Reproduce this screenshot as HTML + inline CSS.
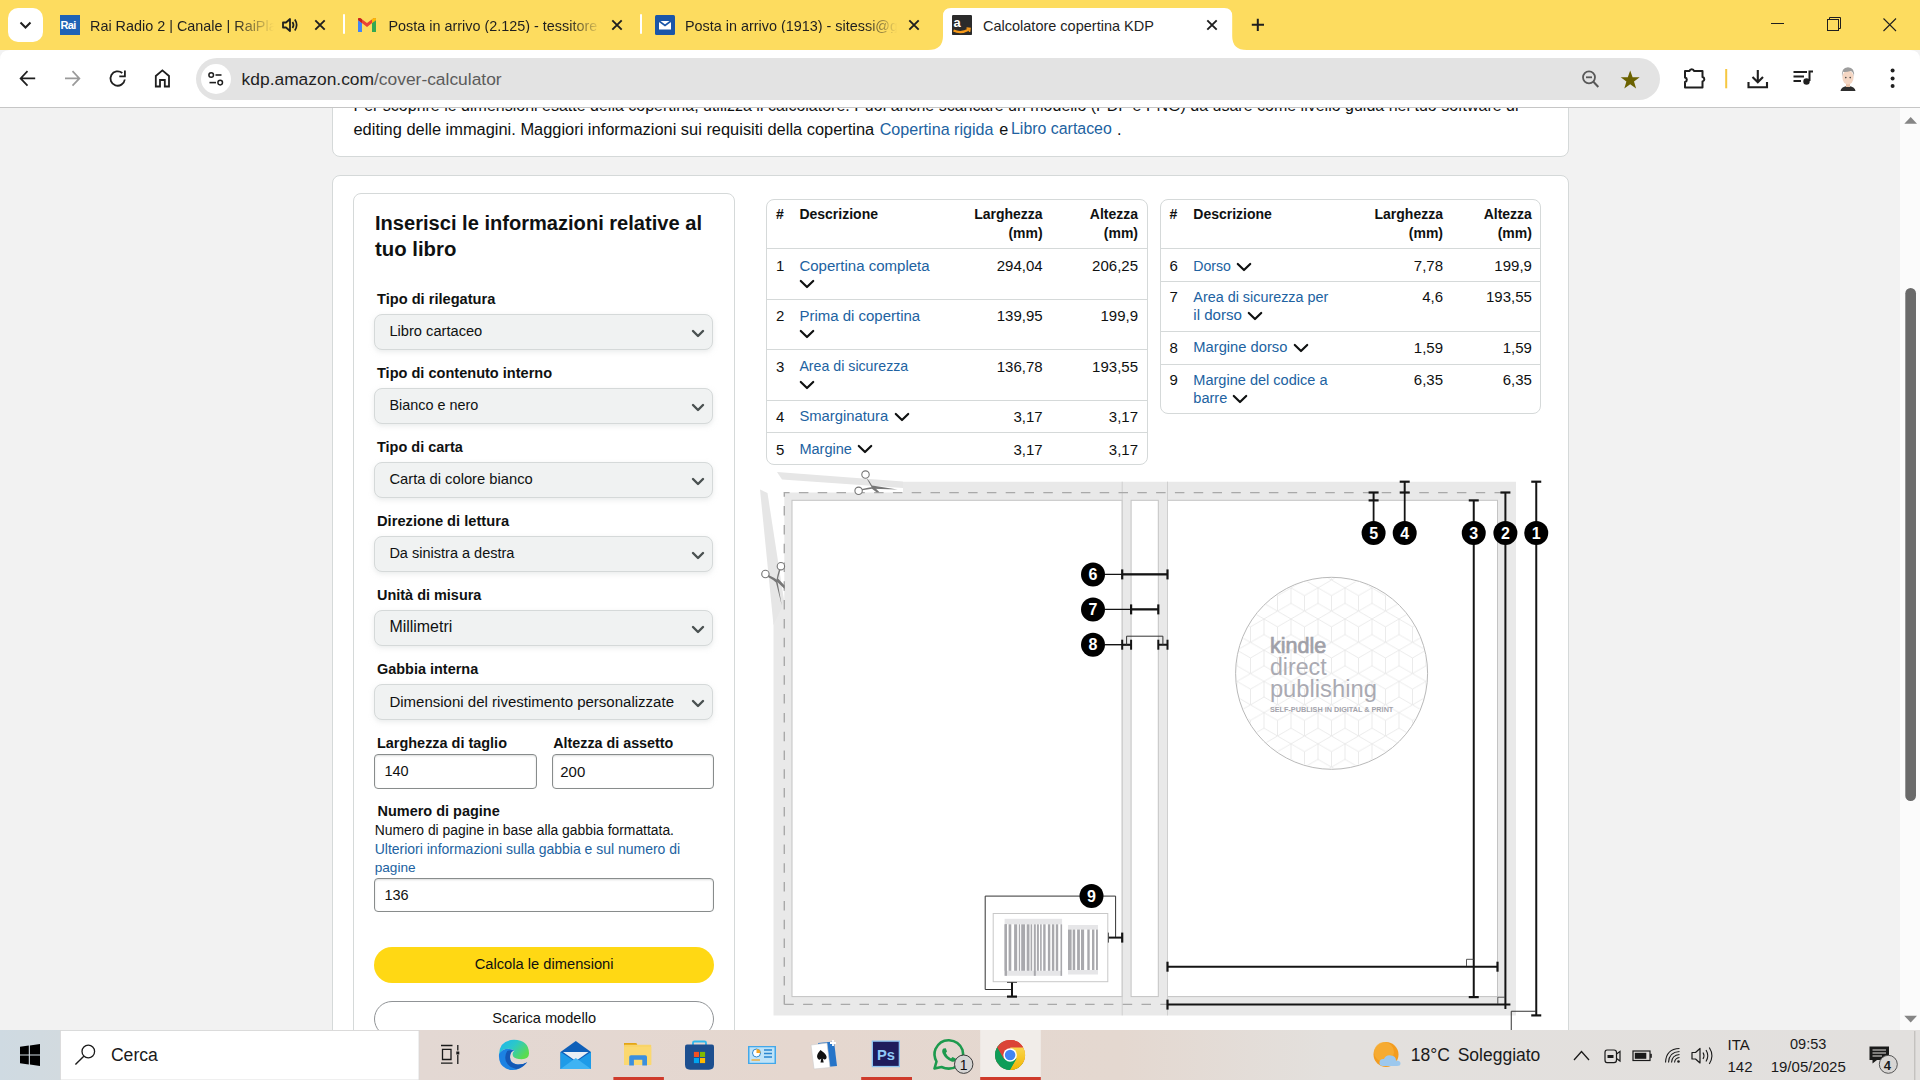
<!DOCTYPE html>
<html><head><meta charset="utf-8"><title>Calcolatore copertina KDP</title>
<style>
html,body{margin:0;padding:0;width:1920px;height:1080px;overflow:hidden;background:#f2f2f2;font-family:"Liberation Sans",sans-serif;}
.a{position:absolute;}
.t{position:absolute;line-height:1;white-space:nowrap;font-family:"Liberation Sans",sans-serif;}
#page{position:absolute;left:0;top:0;width:1920px;height:1080px;overflow:hidden;}
</style></head><body>
<div id="page">
<div class="a" style="left:332px;top:40px;width:1236.5px;height:116.5px;background:#fff;border:1px solid #d5d9d9;border-radius:8px;box-sizing:border-box;"></div>
<div class="t" style="left:353.50px;top:97.60px;font-size:16.0px;font-weight:400;color:#0f1111;">Per scoprire le dimensioni esatte della copertina, utilizza il calcolatore. Puoi anche scaricare un modello (PDF e PNG) da usare come livello guida nel tuo software di</div>
<div class="t" style="left:353.50px;top:120.75px;font-size:16.414px;font-weight:400;color:#0f1111;">editing delle immagini. Maggiori informazioni sui requisiti della copertina</div>
<div class="t" style="left:879.70px;top:120.97px;font-size:16.149px;font-weight:400;color:#2162a1;">Copertina rigida</div>
<div class="t" style="left:999.20px;top:120.93px;font-size:16.2px;font-weight:400;color:#0f1111;">e</div>
<div class="t" style="left:1011.00px;top:121.16px;font-size:15.924px;font-weight:400;color:#2162a1;">Libro cartaceo</div>
<div class="t" style="left:1117.00px;top:120.93px;font-size:16.2px;font-weight:400;color:#0f1111;">.</div>
<div class="a" style="left:332px;top:175px;width:1236.5px;height:1000px;background:#fff;border:1px solid #d5d9d9;border-radius:8px;box-sizing:border-box;"></div>
<div class="a" style="left:353px;top:192.5px;width:381.5px;height:1000px;background:#fff;border:1px solid #d5d9d9;border-radius:8px;box-sizing:border-box;"></div>
<div class="t" style="left:375.00px;top:212.63px;font-size:20.082px;font-weight:700;color:#0f1111;">Inserisci le informazioni relative al</div>
<div class="t" style="left:375.00px;top:239.02px;font-size:20.331px;font-weight:700;color:#0f1111;">tuo libro</div>
<div class="t" style="left:377.00px;top:291.75px;font-size:14.642px;font-weight:700;color:#0f1111;">Tipo di rilegatura</div>
<div class="a" style="left:374.4px;top:314px;width:339.1px;height:36px;background:#f0f2f2;border:1px solid #d5d9d9;border-radius:8px;box-sizing:border-box;box-shadow:0 2px 5px rgba(213,217,217,.5);"></div>
<div class="t" style="left:389.40px;top:324.04px;font-size:14.661px;font-weight:400;color:#0f1111;">Libro cartaceo</div>
<svg class="a" style="left:690px;top:326px" width="16" height="12" viewBox="0 0 16 12"><path d="M3 5 L8 10 L13 5" fill="none" stroke="#4a5151" stroke-width="2.4" stroke-linecap="round" stroke-linejoin="round"/></svg>
<div class="t" style="left:377.00px;top:366.13px;font-size:14.55px;font-weight:700;color:#0f1111;">Tipo di contenuto interno</div>
<div class="a" style="left:374.4px;top:388px;width:339.1px;height:36px;background:#f0f2f2;border:1px solid #d5d9d9;border-radius:8px;box-sizing:border-box;box-shadow:0 2px 5px rgba(213,217,217,.5);"></div>
<div class="t" style="left:389.40px;top:398.25px;font-size:14.407px;font-weight:400;color:#0f1111;">Bianco e nero</div>
<svg class="a" style="left:690px;top:400px" width="16" height="12" viewBox="0 0 16 12"><path d="M3 5 L8 10 L13 5" fill="none" stroke="#4a5151" stroke-width="2.4" stroke-linecap="round" stroke-linejoin="round"/></svg>
<div class="t" style="left:377.00px;top:440.19px;font-size:14.477px;font-weight:700;color:#0f1111;">Tipo di carta</div>
<div class="a" style="left:374.4px;top:462px;width:339.1px;height:36px;background:#f0f2f2;border:1px solid #d5d9d9;border-radius:8px;box-sizing:border-box;box-shadow:0 2px 5px rgba(213,217,217,.5);"></div>
<div class="t" style="left:389.40px;top:471.97px;font-size:14.743px;font-weight:400;color:#0f1111;">Carta di colore bianco</div>
<svg class="a" style="left:690px;top:474px" width="16" height="12" viewBox="0 0 16 12"><path d="M3 5 L8 10 L13 5" fill="none" stroke="#4a5151" stroke-width="2.4" stroke-linecap="round" stroke-linejoin="round"/></svg>
<div class="t" style="left:377.00px;top:513.72px;font-size:14.687px;font-weight:700;color:#0f1111;">Direzione di lettura</div>
<div class="a" style="left:374.4px;top:536px;width:339.1px;height:36px;background:#f0f2f2;border:1px solid #d5d9d9;border-radius:8px;box-sizing:border-box;box-shadow:0 2px 5px rgba(213,217,217,.5);"></div>
<div class="t" style="left:389.40px;top:546.16px;font-size:14.523px;font-weight:400;color:#0f1111;">Da sinistra a destra</div>
<svg class="a" style="left:690px;top:548px" width="16" height="12" viewBox="0 0 16 12"><path d="M3 5 L8 10 L13 5" fill="none" stroke="#4a5151" stroke-width="2.4" stroke-linecap="round" stroke-linejoin="round"/></svg>
<div class="t" style="left:377.00px;top:587.70px;font-size:14.467px;font-weight:700;color:#0f1111;">Unità di misura</div>
<div class="a" style="left:374.4px;top:610px;width:339.1px;height:36px;background:#f0f2f2;border:1px solid #d5d9d9;border-radius:8px;box-sizing:border-box;box-shadow:0 2px 5px rgba(213,217,217,.5);"></div>
<div class="t" style="left:389.40px;top:618.94px;font-size:15.949px;font-weight:400;color:#0f1111;">Millimetri</div>
<svg class="a" style="left:690px;top:622px" width="16" height="12" viewBox="0 0 16 12"><path d="M3 5 L8 10 L13 5" fill="none" stroke="#4a5151" stroke-width="2.4" stroke-linecap="round" stroke-linejoin="round"/></svg>
<div class="t" style="left:377.00px;top:661.70px;font-size:14.469px;font-weight:700;color:#0f1111;">Gabbia interna</div>
<div class="a" style="left:374.4px;top:684px;width:339.1px;height:36px;background:#f0f2f2;border:1px solid #d5d9d9;border-radius:8px;box-sizing:border-box;box-shadow:0 2px 5px rgba(213,217,217,.5);"></div>
<div class="t" style="left:389.40px;top:693.73px;font-size:15.022px;font-weight:400;color:#0f1111;">Dimensioni del rivestimento personalizzate</div>
<svg class="a" style="left:690px;top:696px" width="16" height="12" viewBox="0 0 16 12"><path d="M3 5 L8 10 L13 5" fill="none" stroke="#4a5151" stroke-width="2.4" stroke-linecap="round" stroke-linejoin="round"/></svg>
<div class="t" style="left:377.00px;top:736.22px;font-size:14.444px;font-weight:700;color:#0f1111;">Larghezza di taglio</div>
<div class="t" style="left:553.30px;top:736.34px;font-size:14.302px;font-weight:700;color:#0f1111;">Altezza di assetto</div>
<div class="a" style="left:374.2px;top:754px;width:162.5px;height:35px;background:#fff;border:1px solid #888c8c;border-radius:4px;box-sizing:border-box;box-shadow:inset 0 1px 2px rgba(15,17,17,.15);"></div>
<div class="a" style="left:551.5px;top:754px;width:162.2px;height:35px;background:#fff;border:1px solid #888c8c;border-radius:4px;box-sizing:border-box;box-shadow:inset 0 1px 2px rgba(15,17,17,.15);"></div>
<div class="t" style="left:384.40px;top:764.17px;font-size:14.506px;font-weight:400;color:#0f1111;">140</div>
<div class="t" style="left:560.30px;top:763.76px;font-size:14.985px;font-weight:400;color:#0f1111;">200</div>
<div class="t" style="left:377.50px;top:804.00px;font-size:14.47px;font-weight:700;color:#0f1111;">Numero di pagine</div>
<div class="t" style="left:374.70px;top:824.40px;font-size:13.887px;font-weight:400;color:#0f1111;">Numero di pagine in base alla gabbia formattata.</div>
<div class="t" style="left:374.70px;top:842.41px;font-size:13.991px;font-weight:400;color:#2162a1;">Ulteriori informazioni sulla gabbia e sul numero di</div>
<div class="t" style="left:374.70px;top:860.82px;font-size:13.621px;font-weight:400;color:#2162a1;">pagine</div>
<div class="a" style="left:374.2px;top:877.5px;width:339.4px;height:34px;background:#fff;border:1px solid #888c8c;border-radius:4px;box-sizing:border-box;box-shadow:inset 0 1px 2px rgba(15,17,17,.15);"></div>
<div class="t" style="left:384.40px;top:888.37px;font-size:14.506px;font-weight:400;color:#0f1111;">136</div>
<div class="a" style="left:374.2px;top:947.2px;width:339.4px;height:35.6px;background:#ffd814;border-radius:18px;"></div>
<div class="t" style="left:44.15px;width:1000px;text-align:center;top:957.11px;font-size:14.7px;font-weight:400;color:#0f1111;">Calcola le dimensioni</div>
<div class="a" style="left:374.2px;top:1001.2px;width:339.4px;height:35.6px;background:#fff;border:1px solid #909396;border-radius:18px;box-sizing:border-box;"></div>
<div class="t" style="left:44.15px;width:1000px;text-align:center;top:1011.29px;font-size:14.605px;font-weight:400;color:#0f1111;">Scarica modello</div>
<div class="a" style="left:766px;top:198.6px;width:381.5999999999999px;height:266.20000000000005px;background:#fff;border:1px solid #d5d9d9;border-radius:8px;box-sizing:border-box;"></div>
<div class="t" style="left:776.00px;top:207.30px;font-size:14.0px;font-weight:700;color:#0f1111;">#</div>
<div class="t" style="left:799.40px;top:207.30px;font-size:14.0px;font-weight:700;color:#0f1111;">Descrizione</div>
<div class="t" style="right:877.40px;top:207.30px;font-size:14.0px;font-weight:700;color:#0f1111;">Larghezza</div>
<div class="t" style="right:877.40px;top:225.50px;font-size:14.0px;font-weight:700;color:#0f1111;">(mm)</div>
<div class="t" style="right:782.00px;top:207.30px;font-size:14.0px;font-weight:700;color:#0f1111;">Altezza</div>
<div class="t" style="right:782.00px;top:225.50px;font-size:14.0px;font-weight:700;color:#0f1111;">(mm)</div>
<div class="a" style="left:767px;top:248px;width:379.5999999999999px;height:1.2px;background:#d5d9d9;"></div>
<div class="t" style="left:776.00px;top:257.85px;font-size:15px;font-weight:400;color:#0f1111;">1</div>
<div class="t" style="left:799.40px;top:257.82px;font-size:15.039px;font-weight:400;color:#2162a1;">Copertina completa</div>
<svg class="a" style="left:799px;top:279px" width="16" height="10" viewBox="0 0 16 10"><path d="M1.8 2 L8 8 L14.2 2" fill="none" stroke="#0f1111" stroke-width="2.2" stroke-linecap="round" stroke-linejoin="round"/></svg>
<div class="t" style="right:877.40px;top:257.85px;font-size:15px;font-weight:400;color:#0f1111;">294,04</div>
<div class="t" style="right:782.00px;top:257.85px;font-size:15px;font-weight:400;color:#0f1111;">206,25</div>
<div class="a" style="left:767px;top:298.5px;width:379.5999999999999px;height:1.2px;background:#d5d9d9;"></div>
<div class="t" style="left:776.00px;top:307.55px;font-size:15px;font-weight:400;color:#0f1111;">2</div>
<div class="t" style="left:799.40px;top:307.56px;font-size:14.99px;font-weight:400;color:#2162a1;">Prima di copertina</div>
<svg class="a" style="left:799px;top:329px" width="16" height="10" viewBox="0 0 16 10"><path d="M1.8 2 L8 8 L14.2 2" fill="none" stroke="#0f1111" stroke-width="2.2" stroke-linecap="round" stroke-linejoin="round"/></svg>
<div class="t" style="right:877.40px;top:307.55px;font-size:15px;font-weight:400;color:#0f1111;">139,95</div>
<div class="t" style="right:782.00px;top:307.55px;font-size:15px;font-weight:400;color:#0f1111;">199,9</div>
<div class="a" style="left:767px;top:349px;width:379.5999999999999px;height:1.2px;background:#d5d9d9;"></div>
<div class="t" style="left:776.00px;top:358.65px;font-size:15px;font-weight:400;color:#0f1111;">3</div>
<div class="t" style="left:799.40px;top:359.33px;font-size:14.199px;font-weight:400;color:#2162a1;">Area di sicurezza</div>
<svg class="a" style="left:799px;top:380px" width="16" height="10" viewBox="0 0 16 10"><path d="M1.8 2 L8 8 L14.2 2" fill="none" stroke="#0f1111" stroke-width="2.2" stroke-linecap="round" stroke-linejoin="round"/></svg>
<div class="t" style="right:877.40px;top:358.65px;font-size:15px;font-weight:400;color:#0f1111;">136,78</div>
<div class="t" style="right:782.00px;top:358.65px;font-size:15px;font-weight:400;color:#0f1111;">193,55</div>
<div class="a" style="left:767px;top:400px;width:379.5999999999999px;height:1.2px;background:#d5d9d9;"></div>
<div class="t" style="left:776.00px;top:408.65px;font-size:15px;font-weight:400;color:#0f1111;">4</div>
<div class="t" style="left:799.40px;top:408.81px;font-size:14.81px;font-weight:400;color:#2162a1;">Smarginatura</div>
<svg class="a" style="left:893.5px;top:411.5px" width="16" height="10" viewBox="0 0 16 10"><path d="M1.8 2 L8 8 L14.2 2" fill="none" stroke="#0f1111" stroke-width="2.2" stroke-linecap="round" stroke-linejoin="round"/></svg>
<div class="t" style="right:877.40px;top:408.65px;font-size:15px;font-weight:400;color:#0f1111;">3,17</div>
<div class="t" style="right:782.00px;top:408.65px;font-size:15px;font-weight:400;color:#0f1111;">3,17</div>
<div class="a" style="left:767px;top:432px;width:379.5999999999999px;height:1.2px;background:#d5d9d9;"></div>
<div class="t" style="left:776.00px;top:441.65px;font-size:15px;font-weight:400;color:#0f1111;">5</div>
<div class="t" style="left:799.40px;top:442.02px;font-size:14.561px;font-weight:400;color:#2162a1;">Margine</div>
<svg class="a" style="left:856.5px;top:444px" width="16" height="10" viewBox="0 0 16 10"><path d="M1.8 2 L8 8 L14.2 2" fill="none" stroke="#0f1111" stroke-width="2.2" stroke-linecap="round" stroke-linejoin="round"/></svg>
<div class="t" style="right:877.40px;top:441.65px;font-size:15px;font-weight:400;color:#0f1111;">3,17</div>
<div class="t" style="right:782.00px;top:441.65px;font-size:15px;font-weight:400;color:#0f1111;">3,17</div>
<div class="a" style="left:1160.4px;top:198.6px;width:380.79999999999995px;height:215.70000000000002px;background:#fff;border:1px solid #d5d9d9;border-radius:8px;box-sizing:border-box;"></div>
<div class="t" style="left:1169.40px;top:207.30px;font-size:14.0px;font-weight:700;color:#0f1111;">#</div>
<div class="t" style="left:1193.30px;top:207.30px;font-size:14.0px;font-weight:700;color:#0f1111;">Descrizione</div>
<div class="t" style="right:477.00px;top:207.30px;font-size:14.0px;font-weight:700;color:#0f1111;">Larghezza</div>
<div class="t" style="right:477.00px;top:225.50px;font-size:14.0px;font-weight:700;color:#0f1111;">(mm)</div>
<div class="t" style="right:388.10px;top:207.30px;font-size:14.0px;font-weight:700;color:#0f1111;">Altezza</div>
<div class="t" style="right:388.10px;top:225.50px;font-size:14.0px;font-weight:700;color:#0f1111;">(mm)</div>
<div class="a" style="left:1161.4px;top:248px;width:378.79999999999995px;height:1.2px;background:#d5d9d9;"></div>
<div class="t" style="left:1169.40px;top:257.85px;font-size:15px;font-weight:400;color:#0f1111;">6</div>
<div class="t" style="left:1193.30px;top:258.59px;font-size:14.134px;font-weight:400;color:#2162a1;">Dorso</div>
<svg class="a" style="left:1236px;top:261.5px" width="16" height="10" viewBox="0 0 16 10"><path d="M1.8 2 L8 8 L14.2 2" fill="none" stroke="#0f1111" stroke-width="2.2" stroke-linecap="round" stroke-linejoin="round"/></svg>
<div class="t" style="right:477.00px;top:257.85px;font-size:15px;font-weight:400;color:#0f1111;">7,78</div>
<div class="t" style="right:388.10px;top:257.85px;font-size:15px;font-weight:400;color:#0f1111;">199,9</div>
<div class="a" style="left:1161.4px;top:281px;width:378.79999999999995px;height:1.2px;background:#d5d9d9;"></div>
<div class="t" style="left:1169.40px;top:289.45px;font-size:15px;font-weight:400;color:#0f1111;">7</div>
<div class="t" style="left:1193.30px;top:289.97px;font-size:14.384px;font-weight:400;color:#2162a1;">Area di sicurezza per</div>
<div class="t" style="left:1193.30px;top:307.46px;font-size:15.108px;font-weight:400;color:#2162a1;">il dorso</div>
<svg class="a" style="left:1247px;top:310.5px" width="16" height="10" viewBox="0 0 16 10"><path d="M1.8 2 L8 8 L14.2 2" fill="none" stroke="#0f1111" stroke-width="2.2" stroke-linecap="round" stroke-linejoin="round"/></svg>
<div class="t" style="right:477.00px;top:289.45px;font-size:15px;font-weight:400;color:#0f1111;">4,6</div>
<div class="t" style="right:388.10px;top:289.45px;font-size:15px;font-weight:400;color:#0f1111;">193,55</div>
<div class="a" style="left:1161.4px;top:331px;width:378.79999999999995px;height:1.2px;background:#d5d9d9;"></div>
<div class="t" style="left:1169.40px;top:339.95px;font-size:15px;font-weight:400;color:#0f1111;">8</div>
<div class="t" style="left:1193.30px;top:340.19px;font-size:14.723px;font-weight:400;color:#2162a1;">Margine dorso</div>
<svg class="a" style="left:1292.5px;top:342.5px" width="16" height="10" viewBox="0 0 16 10"><path d="M1.8 2 L8 8 L14.2 2" fill="none" stroke="#0f1111" stroke-width="2.2" stroke-linecap="round" stroke-linejoin="round"/></svg>
<div class="t" style="right:477.00px;top:339.95px;font-size:15px;font-weight:400;color:#0f1111;">1,59</div>
<div class="t" style="right:388.10px;top:339.95px;font-size:15px;font-weight:400;color:#0f1111;">1,59</div>
<div class="a" style="left:1161.4px;top:364px;width:378.79999999999995px;height:1.2px;background:#d5d9d9;"></div>
<div class="t" style="left:1169.40px;top:372.45px;font-size:15px;font-weight:400;color:#0f1111;">9</div>
<div class="t" style="left:1193.30px;top:372.83px;font-size:14.555px;font-weight:400;color:#2162a1;">Margine del codice a</div>
<div class="t" style="left:1193.30px;top:390.92px;font-size:14.566px;font-weight:400;color:#2162a1;">barre</div>
<svg class="a" style="left:1231.5px;top:393.5px" width="16" height="10" viewBox="0 0 16 10"><path d="M1.8 2 L8 8 L14.2 2" fill="none" stroke="#0f1111" stroke-width="2.2" stroke-linecap="round" stroke-linejoin="round"/></svg>
<div class="t" style="right:477.00px;top:372.45px;font-size:15px;font-weight:400;color:#0f1111;">6,35</div>
<div class="t" style="right:388.10px;top:372.45px;font-size:15px;font-weight:400;color:#0f1111;">6,35</div>
<svg class="a" style="left:0;top:0" width="1920" height="1030" viewBox="0 0 1920 1030"><path d="M903 481.7 H1516 V1015.4 H773.5 V600 L784.3 600 L784.3 492.6 L903 492.6 Z" fill="#e9e9e9"/><path d="M777 472 L903 481.5 L903 488 L782 479.5 Z" fill="#e6e6e6"/><path d="M760 489.5 L767.5 493 L784.3 602 L773.5 625 Z" fill="#e6e6e6"/><rect x="792" y="500.3" width="330.20000000000005" height="496.3" fill="#fff" stroke="#c4c4c4" stroke-width="1"/><rect x="1131.1" y="500.3" width="27.200000000000045" height="496.3" fill="#fff" stroke="#c4c4c4" stroke-width="1"/><rect x="1167.5" y="500.3" width="330.0" height="496.3" fill="#fff" stroke="#c4c4c4" stroke-width="1"/><path d="M1122.2 481.7 V1015.4 M1167.5 481.7 V1015.4" stroke="#cfcfcf" stroke-width="1"/><path d="M784.3 1004.4 V492.6 H1505.4" fill="none" stroke="#a9a9a9" stroke-width="1.4" stroke-dasharray="9.5 9.3"/><path d="M784.3 1004.4 H1167.5" fill="none" stroke="#a9a9a9" stroke-width="1.4" stroke-dasharray="9.5 9.3"/><path d="M1536.25 481.7 V1015.4" stroke="#141414" stroke-width="2"/><path d="M1531.25 481.7 H1541.25" stroke="#141414" stroke-width="2.2"/><path d="M1531.25 1015.4 H1541.25" stroke="#141414" stroke-width="2.2"/><path d="M1505.4 492.5 V1009" stroke="#141414" stroke-width="2"/><path d="M1500.4 492.5 H1510.4" stroke="#141414" stroke-width="2.2"/><path d="M1473.75 500.4 V997.1" stroke="#141414" stroke-width="2"/><path d="M1468.75 500.4 H1478.75" stroke="#141414" stroke-width="2.2"/><path d="M1468.75 997.1 H1478.75" stroke="#141414" stroke-width="2.2"/><path d="M1404.7 481.7 V492.5" stroke="#141414" stroke-width="2"/><path d="M1399.7 481.7 H1409.7" stroke="#141414" stroke-width="2.2"/><path d="M1399.7 492.5 H1409.7" stroke="#141414" stroke-width="2.2"/><path d="M1404.7 492.5 V530" stroke="#141414" stroke-width="1.8"/><path d="M1373.6 492.5 V500.4" stroke="#141414" stroke-width="2"/><path d="M1368.6 492.5 H1378.6" stroke="#141414" stroke-width="2.2"/><path d="M1368.6 500.4 H1378.6" stroke="#141414" stroke-width="2.2"/><path d="M1373.6 500.4 V530" stroke="#141414" stroke-width="1.8"/><path d="M1167.5 966.7 H1497.5" stroke="#141414" stroke-width="2"/><path d="M1167.5 961.7 V971.7" stroke="#141414" stroke-width="2.2"/><path d="M1497.5 961.7 V971.7" stroke="#141414" stroke-width="2.2"/><path d="M1466.5 966 V959.3 H1473.7" fill="none" stroke="#444" stroke-width="0.9"/><path d="M1167.5 1004.6 H1510.4" stroke="#141414" stroke-width="2"/><path d="M1167.5 999.6 V1009.6" stroke="#141414" stroke-width="2.2"/><path d="M1497.8 1004 V997.2 H1505.2" fill="none" stroke="#444" stroke-width="0.9"/><path d="M1511.25 1032 V1011.25 H1536" fill="none" stroke="#333" stroke-width="1"/><path d="M1105 574.4 H1167.5" stroke="#141414" stroke-width="1.4"/><path d="M1167.5 569.4 V579.4" stroke="#141414" stroke-width="2.2"/><path d="M1122.2 569.4 V579.4" stroke="#141414" stroke-width="2.2"/><path d="M1122.2 574.4 H1167.5" stroke="#141414" stroke-width="2.2"/><path d="M1105 609.4 H1158.3" stroke="#141414" stroke-width="1.4"/><path d="M1158.3 604.4 V614.4" stroke="#141414" stroke-width="2.2"/><path d="M1131.1 604.4 V614.4" stroke="#141414" stroke-width="2.2"/><path d="M1131.1 609.4 H1158.3" stroke="#141414" stroke-width="2.2"/><path d="M1105 644.7 H1131.1" stroke="#141414" stroke-width="1.4"/><path d="M1122.2 644.7 H1131.1 M1158.3 644.7 H1167.5" stroke="#141414" stroke-width="2"/><path d="M1122.2 639.7 V649.7" stroke="#141414" stroke-width="2"/><path d="M1131.1 639.7 V649.7" stroke="#141414" stroke-width="2"/><path d="M1158.3 639.7 V649.7" stroke="#141414" stroke-width="2"/><path d="M1167.5 639.7 V649.7" stroke="#141414" stroke-width="2"/><path d="M1126.6 645 V636.2 H1162.9 V645" fill="none" stroke="#333" stroke-width="1"/><path d="M985.2 896.1 H1115.6 V937.6 M985.2 896.1 V989.5 H1012" fill="none" stroke="#333" stroke-width="1"/><path d="M1107.8 937.6 H1122.2" stroke="#141414" stroke-width="2"/><path d="M1107.8 932.6 V942.6" stroke="#141414" stroke-width="2.2"/><path d="M1122.2 932.6 V942.6" stroke="#141414" stroke-width="2.2"/><path d="M1012 981.7 V996.6" stroke="#141414" stroke-width="2"/><path d="M1007 981.7 H1017" stroke="#141414" stroke-width="2.2"/><path d="M1007 996.6 H1017" stroke="#141414" stroke-width="2.2"/><rect x="993.2" y="913.5" width="114.6" height="68.2" fill="#fff" stroke="#c8c8c8" stroke-width="1"/><rect x="1004.6" y="918.8" width="57.5" height="5.5" fill="#e6e6e8"/><rect x="1004.6" y="970.8" width="57.5" height="5" fill="#e6e6e8"/><rect x="1004.6" y="924.3" width="2.4" height="46.5" fill="#a9a9ad"/><rect x="1008.6" y="924.3" width="2.7" height="46.5" fill="#a9a9ad"/><rect x="1014.1" y="924.3" width="3.1" height="46.5" fill="#a9a9ad"/><rect x="1018.8" y="924.3" width="1.3" height="46.5" fill="#a9a9ad"/><rect x="1021.2" y="924.3" width="3.9" height="46.5" fill="#a9a9ad"/><rect x="1026.7" y="924.3" width="2.8" height="46.5" fill="#a9a9ad"/><rect x="1030.6" y="924.3" width="1.6" height="46.5" fill="#a9a9ad"/><rect x="1036.9" y="924.3" width="2.0" height="46.5" fill="#a9a9ad"/><rect x="1040.1" y="924.3" width="1.6" height="46.5" fill="#a9a9ad"/><rect x="1043.2" y="924.3" width="2.4" height="46.5" fill="#a9a9ad"/><rect x="1047.9" y="924.3" width="2.4" height="46.5" fill="#a9a9ad"/><rect x="1051.9" y="924.3" width="2.4" height="46.5" fill="#a9a9ad"/><rect x="1055.8" y="924.3" width="2.4" height="46.5" fill="#a9a9ad"/><rect x="1004.6" y="924.3" width="2.4" height="51.5" fill="#a9a9ad"/><rect x="1033.8" y="924.3" width="2.0" height="51.5" fill="#a9a9ad"/><rect x="1060.5" y="924.3" width="1.6" height="51.5" fill="#a9a9ad"/><rect x="1068" y="925" width="30" height="4.5" fill="#e6e6e8"/><rect x="1068" y="970" width="30" height="4.5" fill="#e6e6e8"/><rect x="1068" y="929.5" width="3.6" height="40.5" fill="#a9a9ad"/><rect x="1072.7" y="929.5" width="2.5" height="40.5" fill="#a9a9ad"/><rect x="1077.1" y="929.5" width="2.8" height="40.5" fill="#a9a9ad"/><rect x="1081" y="929.5" width="3.1" height="40.5" fill="#a9a9ad"/><rect x="1087.3" y="929.5" width="2.4" height="40.5" fill="#a9a9ad"/><rect x="1092" y="929.5" width="2.4" height="40.5" fill="#a9a9ad"/><rect x="1096" y="929.5" width="1.9" height="40.5" fill="#a9a9ad"/><circle cx="1331.6" cy="673.3" r="96" fill="#fff" stroke="#b9b9b9" stroke-width="1"/><defs><clipPath id="lc"><circle cx="1331.6" cy="673.3" r="95"/></clipPath><pattern id="hex" width="27" height="31.2" patternUnits="userSpaceOnUse" x="1237" y="580"><path d="M13.5 0 L27 7.8 V23.4 L13.5 31.2 L0 23.4 V7.8 Z M13.5 15.6 L27 7.8 M13.5 15.6 L0 7.8 M13.5 15.6 V31.2" fill="none" stroke="#e6e6e6" stroke-width="0.8"/></pattern></defs><circle cx="1331.6" cy="673.3" r="95" fill="url(#hex)"/><text x="1269.9" y="652.6" font-family="Liberation Sans" font-weight="400" font-size="22" fill="#a0a0a8" stroke="#a0a0a8" stroke-width="0.7" textLength="56.3" lengthAdjust="spacingAndGlyphs">kindle</text><text x="1269.9" y="675" font-family="Liberation Sans" font-size="23" fill="#aaaab2" textLength="56.7" lengthAdjust="spacingAndGlyphs">direct</text><text x="1269.9" y="697.4" font-family="Liberation Sans" font-size="23.5" fill="#aaaab2" textLength="107" lengthAdjust="spacingAndGlyphs">publishing</text><text x="1269.9" y="711.5" font-family="Liberation Sans" font-weight="700" font-size="7.6" fill="#a3a3ab" textLength="123.4" lengthAdjust="spacingAndGlyphs">SELF-PUBLISH IN DIGITAL &amp; PRINT</text><circle cx="1536.25" cy="532.9" r="12" fill="#000"/><text x="1536.25" y="538.5" font-family="Liberation Sans" font-weight="700" font-size="16" fill="#fff" text-anchor="middle">1</text><circle cx="1505.4" cy="532.9" r="12" fill="#000"/><text x="1505.4" y="538.5" font-family="Liberation Sans" font-weight="700" font-size="16" fill="#fff" text-anchor="middle">2</text><circle cx="1473.75" cy="532.9" r="12" fill="#000"/><text x="1473.75" y="538.5" font-family="Liberation Sans" font-weight="700" font-size="16" fill="#fff" text-anchor="middle">3</text><circle cx="1404.7" cy="532.9" r="12" fill="#000"/><text x="1404.7" y="538.5" font-family="Liberation Sans" font-weight="700" font-size="16" fill="#fff" text-anchor="middle">4</text><circle cx="1373.6" cy="532.9" r="12" fill="#000"/><text x="1373.6" y="538.5" font-family="Liberation Sans" font-weight="700" font-size="16" fill="#fff" text-anchor="middle">5</text><circle cx="1093" cy="574.4" r="12" fill="#000"/><text x="1093" y="580.0" font-family="Liberation Sans" font-weight="700" font-size="16" fill="#fff" text-anchor="middle">6</text><circle cx="1093" cy="609.4" r="12" fill="#000"/><text x="1093" y="615.0" font-family="Liberation Sans" font-weight="700" font-size="16" fill="#fff" text-anchor="middle">7</text><circle cx="1093" cy="644.7" r="12" fill="#000"/><text x="1093" y="650.3000000000001" font-family="Liberation Sans" font-weight="700" font-size="16" fill="#fff" text-anchor="middle">8</text><circle cx="1091.5" cy="896.1" r="12" fill="#000"/><text x="1091.5" y="901.7" font-family="Liberation Sans" font-weight="700" font-size="16" fill="#fff" text-anchor="middle">9</text><g fill="none" stroke="#777" stroke-width="1.1"><circle cx="865.5" cy="474.6" r="3.7" fill="#fff"/><circle cx="858.6" cy="490.8" r="3.7" fill="#fff"/></g><path d="M866.5 478.3 Q870 481 872 485.5 L897.5 489.4 L872.5 488.8 Z" fill="#777"/><path d="M862 489 Q868 487.5 874 486.8 L879.5 492.3 L876.5 492.3 L872 488.8 Q867 489.5 862.2 490.2 Z" fill="#777"/><g fill="#fff" stroke="#777" stroke-width="1.1"><circle cx="765.4" cy="574" r="3.7"/><circle cx="780.9" cy="566.2" r="3.7"/></g><path d="M768.5 575 Q774 577.5 777.2 580 L781.8 605.5 L776 582.5 Q772.5 579.2 768 576.9 Z" fill="#777"/><path d="M780.4 569.8 Q779.2 574 778 578.5 L784.6 585.5 L784.6 589 L776.3 581 Q777.3 575 779 569.5 Z" fill="#777"/></svg>
</div>
<div class="a" style="left:1900px;top:108px;width:20px;height:922px;background:#fbfbfb;"></div>
<svg class="a" style="left:1900px;top:108px" width="20" height="922"><path d="M4.3 15.8 L10.7 9 L17 15.8 Z" fill="#858585"/><path d="M4.3 907.8 L10.7 914.6 L17 907.8 Z" fill="#858585"/><rect x="5.3" y="180" width="10.7" height="513" rx="5.3" fill="#6a6a6a"/></svg>
<div class="a" style="left:0;top:0;width:1920px;height:50px;background:#fddc5f;"></div>
<!-- tab dropdown -->
<div class="a" style="left:8px;top:8px;width:35px;height:34px;border-radius:10px;background:#fff;"></div>
<svg class="a" style="left:8px;top:8px" width="35" height="34"><path d="M12.5 14.5 L17.5 19.5 L22.5 14.5" fill="none" stroke="#1f1f1f" stroke-width="2"/></svg>
<!-- tab 1 -->
<div class="a" style="left:60px;top:15px;width:20px;height:20px;background:#1f63b6;"></div>
<div class="t" style="left:60.5px;top:19.5px;font-size:11px;font-weight:700;color:#fff;letter-spacing:-0.6px;">Rai</div>
<div class="t" style="left:90px;top:18.6px;font-size:14.4px;color:#1f1f1f;width:184px;overflow:hidden;-webkit-mask-image:linear-gradient(90deg,#000 78%,transparent 100%);">Rai Radio 2 | Canale | RaiPlay Sound</div>
<svg class="a" style="left:280px;top:15px" width="20" height="20"><path d="M3 7.5 H6 L10 4 V16 L6 12.5 H3 Z" fill="none" stroke="#1f1f1f" stroke-width="1.8" stroke-linejoin="round"/><path d="M12.5 7 Q14.5 10 12.5 13" fill="none" stroke="#1f1f1f" stroke-width="1.7"/><path d="M14.8 4.5 Q18.5 10 14.8 15.5" fill="none" stroke="#1f1f1f" stroke-width="1.7"/></svg>
<svg class="a" style="left:310px;top:15px" width="20" height="20"><path d="M5.3 5.3 L14.7 14.7 M14.7 5.3 L5.3 14.7" stroke="#1f1f1f" stroke-width="1.9"/></svg>
<div class="a" style="left:343px;top:14px;width:2px;height:20px;background:#fff;border-radius:1px;"></div>
<!-- tab 2 gmail -->
<svg class="a" style="left:357px;top:17px" width="20" height="16" viewBox="0 0 20 16"><path d="M1 3 V15 H5 V6 Z" fill="#4285f4"/><path d="M15 6 V15 H19 V3 Z" fill="#34a853"/><path d="M1 3 L10 10 L19 3 L19 1.5 Q18 0.5 16.5 1.2 L10 6 L3.5 1.2 Q2 0.5 1 1.5 Z" fill="#ea4335"/><path d="M15 6 L19 3 V1.5 Q18 0.5 16.5 1.2 L15 2.3 Z" fill="#fbbc04"/><path d="M1 3 L5 6 V2.3 L3.5 1.2 Q2 0.5 1 1.5 Z" fill="#c5221f"/></svg>
<div class="t" style="left:388.5px;top:18.6px;font-size:14.4px;color:#1f1f1f;width:212px;overflow:hidden;-webkit-mask-image:linear-gradient(90deg,#000 85%,transparent 100%);">Posta in arrivo (2.125) - tessitore</div>
<svg class="a" style="left:607px;top:15px" width="20" height="20"><path d="M5.3 5.3 L14.7 14.7 M14.7 5.3 L5.3 14.7" stroke="#1f1f1f" stroke-width="1.9"/></svg>
<div class="a" style="left:640px;top:14px;width:2px;height:20px;background:#fff;border-radius:1px;"></div>
<!-- tab 3 mail -->
<svg class="a" style="left:655px;top:15px" width="20" height="20"><rect x="0" y="0" width="20" height="20" rx="1.5" fill="#1a56a8"/><path d="M4 6 H16 V14.5 H4 Z" fill="#fff"/><path d="M4 6 L10 10.5 L16 6" fill="none" stroke="#1a56a8" stroke-width="1.6"/></svg>
<div class="t" style="left:685px;top:18.6px;font-size:14.4px;color:#1f1f1f;width:212px;overflow:hidden;-webkit-mask-image:linear-gradient(90deg,#000 85%,transparent 100%);">Posta in arrivo (1913) - sitessi@gmail.com</div>
<svg class="a" style="left:904px;top:15px" width="20" height="20"><path d="M5.3 5.3 L14.7 14.7 M14.7 5.3 L5.3 14.7" stroke="#1f1f1f" stroke-width="1.9"/></svg>
<!-- active tab -->
<svg class="a" style="left:928px;top:7px" width="320" height="44"><path d="M0 43 Q15 43 15 29 V9 Q15 1 23 1 H296.2 Q304.2 1 304.2 9 V29 Q304.2 43 318.7 43 V44 H0 Z" fill="#fff"/></svg>
<svg class="a" style="left:952px;top:15px" width="20" height="20"><rect x="0" y="0" width="20" height="20" rx="1.5" fill="#232f3e"/><rect x="0" y="0" width="20" height="20" rx="1.5" fill="#2b2b2b"/><text x="1.5" y="12" font-family="Liberation Sans" font-weight="700" font-size="13" fill="#fff">a</text><path d="M1.5 15.5 Q9 19 17 14.5" fill="none" stroke="#f79a1a" stroke-width="2.2"/><path d="M14.5 13 L18 13.5 L17.5 17" fill="none" stroke="#f79a1a" stroke-width="1.6"/></svg>
<div class="t" style="left:983px;top:18.6px;font-size:14.5px;color:#1f1f1f;">Calcolatore copertina KDP</div>
<svg class="a" style="left:1202.4px;top:14.8px" width="20" height="20"><path d="M5.3 5.3 L14.7 14.7 M14.7 5.3 L5.3 14.7" stroke="#1f1f1f" stroke-width="1.9"/></svg>
<svg class="a" style="left:1248px;top:15px" width="20" height="20"><path d="M9.8 3.8 V16 M3.8 9.8 H16" stroke="#1f1f1f" stroke-width="2"/></svg>
<!-- window controls -->
<svg class="a" style="left:1760px;top:10px" width="150" height="30"><path d="M11 13.5 H24" stroke="#1f1f1f" stroke-width="1"/><rect x="67.5" y="9.5" width="11" height="11" fill="none" stroke="#1f1f1f" stroke-width="1"/><path d="M69.5 9.5 V7.5 H80.5 V18.5 H78.5" fill="none" stroke="#1f1f1f" stroke-width="1"/><path d="M123.5 8.5 L136 21 M136 8.5 L123.5 21" stroke="#1f1f1f" stroke-width="1.1"/></svg>

<!-- toolbar -->
<svg class="a" style="left:0;top:50px" width="1920" height="58"><path d="M0 10 Q0 0 10 0 H1910 Q1920 0 1920 10 V58 H0 Z" fill="#fff"/><rect x="0" y="57" width="1920" height="1" fill="#c6c6c6"/></svg>
<svg class="a" style="left:0;top:50px" width="200" height="57">
<path d="M21 28.4 H35.2 M27.5 21.2 L20.6 28.4 L27.5 35.6" fill="none" stroke="#1f1f1f" stroke-width="1.7" stroke-linejoin="miter"/>
<path d="M65 28.4 H79.5 M72.5 21.2 L79.4 28.4 L72.5 35.6" fill="none" stroke="#9a9a9a" stroke-width="1.7"/>
<path d="M124.8 29.5 A7.2 7.2 0 1 1 122.3 23" fill="none" stroke="#1f1f1f" stroke-width="1.8"/><path d="M124.9 20.6 V26.3 H119.3" fill="none" stroke="#1f1f1f" stroke-width="1.8"/>
<path d="M155.8 36.5 V26 L162.4 20.4 L169 26 V36.5 H164.8 V30 H160 V36.5 Z" fill="none" stroke="#1f1f1f" stroke-width="1.8" stroke-linejoin="miter"/>
</svg>
<div class="a" style="left:195.5px;top:58px;width:1464px;height:42px;border-radius:21px;background:#e3e3e3;"></div>
<div class="a" style="left:201px;top:64px;width:30px;height:30px;border-radius:15px;background:#fff;"></div>
<svg class="a" style="left:201px;top:64px" width="30" height="30"><circle cx="10.2" cy="11" r="2.3" fill="none" stroke="#1f1f1f" stroke-width="1.5"/><path d="M14.5 11 H20.5" stroke="#1f1f1f" stroke-width="1.6"/><circle cx="19.2" cy="18.6" r="2.3" fill="none" stroke="#1f1f1f" stroke-width="1.5"/><path d="M8.5 18.6 H15" stroke="#1f1f1f" stroke-width="1.6"/></svg>
<div class="t" style="left:241.6px;top:70.8px;font-size:17.4px;color:#1f1f1f;">kdp.amazon.com<span style="color:#5b5b5b">/cover-calculator</span></div>
<svg class="a" style="left:1570px;top:60px" width="350" height="40">
<circle cx="19" cy="17.3" r="6" fill="none" stroke="#585858" stroke-width="1.8"/><path d="M16 17.3 H22" stroke="#585858" stroke-width="1.8"/><path d="M23.2 21.5 L28.3 27" stroke="#585858" stroke-width="2"/>
<path d="M60.2 10.5 L62.6 17.2 L69.7 17.3 L64 21.6 L66.1 28.4 L60.2 24.3 L54.3 28.4 L56.4 21.6 L50.7 17.3 L57.8 17.2 Z" fill="#6b6200"/>
<path d="M115 11 H119.5 A2.3 2.3 0 0 1 124 11 H132.5 V17 A2.3 2.3 0 0 1 132.5 21.5 V27.5 H115 V22 A2.3 2.3 0 0 0 115 17.5 Z" fill="none" stroke="#1f1f1f" stroke-width="2" stroke-linejoin="round"/>
<rect x="155.2" y="9" width="2" height="19.3" fill="#f6c741"/>
<path d="M187.8 10 V22 M182.5 17 L187.8 22.3 L193 17" fill="none" stroke="#1f1f1f" stroke-width="2.1"/><path d="M178.5 22 V27.3 H197 V22" fill="none" stroke="#1f1f1f" stroke-width="2.1"/>
<path d="M223.5 12 H237 M223.5 16.5 H234 M223.5 21 H231" stroke="#1f1f1f" stroke-width="2"/><path d="M239.5 21 V11.5 H243" fill="none" stroke="#1f1f1f" stroke-width="2"/><circle cx="236.5" cy="21.5" r="3.2" fill="#1f1f1f"/>
<circle cx="322.6" cy="10.5" r="2" fill="#1f1f1f"/><circle cx="322.6" cy="18.5" r="2" fill="#1f1f1f"/><circle cx="322.6" cy="26" r="2" fill="#1f1f1f"/>
</svg>
<!-- avatar -->
<svg class="a" style="left:1834px;top:64px" width="28" height="28">
<path d="M6.5 27 Q7 22.5 14 22 Q21 22.5 21.5 27 Z" fill="#2e2e2e"/>
<rect x="12" y="18" width="4" height="5" fill="#e9c2a8"/>
<ellipse cx="14" cy="13.5" rx="5.6" ry="7" fill="#f4d6c3"/>
<path d="M8 13 Q7 3.5 14 3.3 Q21 3.5 20 13 Q19.5 7.5 16.5 7 Q12 8.5 9 7.8 Z" fill="#9d9d9d"/>
<circle cx="11.8" cy="13.6" r="0.8" fill="#444"/><circle cx="16.2" cy="13.6" r="0.8" fill="#444"/>
</svg>

<div class="a" style="left:0;top:1030px;width:1920px;height:50px;background:linear-gradient(90deg,#cfdae2 0px,#d2dadf 60px,#e3d8d3 420px,#e5d7cf 800px,#e4d8d0 1120px,#e3e0dd 1330px,#e2e0de 1920px);"></div>
<svg class="a" style="left:0;top:1030px" width="1920" height="50" viewBox="0 1030 1920 50">
<!-- windows logo -->
<path d="M20 1046.8 L28.8 1045.6 V1054.4 H20 Z M29.9 1045.4 L40 1044 V1054.4 H29.9 Z M20 1055.5 H28.8 V1064.4 L20 1063.2 Z M29.9 1055.5 H40 V1065.9 L29.9 1064.5 Z" fill="#000"/>
<!-- search box -->
<rect x="60.4" y="1030.6" width="358.6" height="49.4" fill="#fff"/>
<rect x="60.4" y="1030.6" width="358.6" height="49.4" fill="none" stroke="#d8d8d8" stroke-width="0.8"/>
<circle cx="88.3" cy="1051.5" r="6.3" fill="none" stroke="#1a1a1a" stroke-width="1.3"/>
<path d="M83.8 1056.2 L75.4 1064.6" stroke="#1a1a1a" stroke-width="1.4"/>
<!-- task view -->
<path d="M441 1045.5 H452.5 M441 1063.2 H452.5 M442.5 1049.3 H451 V1059.5 H442.5 Z M457.8 1045 V1050.5 M457.8 1055 V1064" fill="none" stroke="#1a1a1a" stroke-width="1.3"/>
<rect x="456.3" y="1051.5" width="3" height="3" fill="#1a1a1a"/>
<!-- edge -->
<defs>
<linearGradient id="eg1" x1="0" y1="0" x2="1" y2="1"><stop offset="0" stop-color="#35c1f1"/><stop offset="0.5" stop-color="#1f8fdc"/><stop offset="1" stop-color="#1457a8"/></linearGradient>
<linearGradient id="eg2" x1="0" y1="0" x2="1" y2="0.6"><stop offset="0" stop-color="#1cb4f4"/><stop offset="0.5" stop-color="#2cc8c8"/><stop offset="1" stop-color="#5bdc4e"/></linearGradient>
<linearGradient id="chg" x1="0" y1="0" x2="0" y2="1"><stop offset="0" stop-color="#f8d64e"/><stop offset="1" stop-color="#f3b400"/></linearGradient>
</defs>
<path d="M499 1054.5 Q499.5 1040 514 1039.8 Q528.5 1040 529 1053 Q529.3 1059 521.5 1059.2 Q515.5 1059.2 513.2 1056.5 Q511.5 1053 514.5 1050.6 Q509 1047.2 503.5 1049.8 Q500.3 1051.8 499 1056 Z" fill="url(#eg2)"/>
<path d="M499 1054.5 Q498.2 1064.5 506 1068.6 Q513 1071.8 520 1068.2 Q524.3 1066 527.2 1062.3 Q522 1065.2 516 1064.3 Q510 1062.8 510 1057.2 Q510 1051.5 514.5 1050.6 Q508.5 1047.2 503.2 1049.9 Q499.6 1052 499 1054.5 Z" fill="#1c82e3"/>
<path d="M507.2 1051 Q504.3 1055.5 505.8 1061 Q508.5 1067.6 516 1068.9 Q521.5 1069 527.2 1062.3 Q522 1065.2 516 1064.3 Q510 1062.8 510 1057.2 Q510 1052.5 513.2 1050.6 Q510 1049.6 507.2 1051 Z" fill="#1458b5"/>
<!-- mail -->
<path d="M560.5 1052 L575.8 1041 L591 1052 V1069 H560.5 Z" fill="#0f5fb8"/>
<path d="M563 1052 H588.5 L575.8 1061 Z" fill="#e8eef5"/>
<path d="M560.5 1052 L575.8 1062 L591 1052 V1069 H560.5 Z" fill="#1e9be8"/>
<path d="M560.5 1069 L575.8 1058 L591 1069 Z" fill="#3fb3f3"/>
<!-- explorer -->
<path d="M624 1043 H635.5 Q637.3 1043 637.3 1044.9 Q637.3 1046.7 635.5 1046.7 H624 Z" fill="#e3a514"/>
<rect x="624" y="1044.8" width="27.2" height="20.2" rx="0.8" fill="#f9d468"/>
<rect x="624" y="1047" width="27.2" height="18" fill="#fbd86f"/>
<path d="M629.2 1065.5 V1057 Q629.2 1055.2 631 1055.2 H645.2 Q647 1055.2 647 1057 V1065.5 H642.3 V1059.8 H633.9 V1065.5 Z" fill="#3b8fde"/>
<rect x="613.4" y="1077" width="50.5" height="3" fill="#cf3b2b"/>
<!-- store -->
<path d="M693 1046.5 V1042.8 Q693 1041.5 694.5 1041.5 H704.5 Q706 1041.5 706 1042.8 V1046.5" fill="none" stroke="#2fb8ee" stroke-width="1.8"/>
<path d="M685 1046.5 Q685 1044.4 687 1044.4 H712 Q714 1044.4 714 1046.5 V1064.5 Q714 1069.7 709 1069.7 H690 Q685 1069.7 685 1064.5 Z" fill="#1d4f8f"/>
<rect x="693.9" y="1051.9" width="5.1" height="5.1" fill="#f25022"/><rect x="700" y="1051.9" width="5.1" height="5.1" fill="#7fba00"/><rect x="693.9" y="1058" width="5.1" height="5.1" fill="#00a4ef"/><rect x="700" y="1058" width="5.1" height="5.1" fill="#ffb900"/>
<!-- control panel -->
<rect x="748" y="1046" width="28" height="18" fill="#43a8ea"/><rect x="749.5" y="1047.3" width="25" height="15.5" fill="#bfe3f8"/>
<circle cx="756.5" cy="1053" r="4" fill="#fff" stroke="#2a86cf" stroke-width="1"/><path d="M756.5 1053 V1049 A4 4 0 0 1 760.5 1053 Z" fill="#f5a623"/>
<path d="M764 1050 H772 M764 1053.5 H772 M764 1057 H772" stroke="#2a86cf" stroke-width="1.3"/><path d="M751.5 1060 H760" stroke="#f5a623" stroke-width="1.3"/>
<!-- solitaire -->
<path d="M818 1043 L834 1041.5 L837 1066 L821 1067.5 Z" fill="#2674c8"/>
<path d="M811 1045 L827 1043 L830 1067.5 L814 1069 Z" fill="#fff" stroke="#ccc" stroke-width="0.6"/>
<path d="M820.5 1050 Q815 1056 818 1059 Q820 1060.5 821.3 1058.5 L820.5 1062.5 H823.7 L822.8 1058.5 Q824.5 1060.5 826.2 1058.8 Q828.4 1055.5 820.5 1050 Z" fill="#111"/>
<path d="M833 1040 V1046 M830 1043 H836" stroke="#fff" stroke-width="1.8"/>
<!-- photoshop -->
<rect x="871.7" y="1040.5" width="28.3" height="26.7" fill="#8fc4f0"/><rect x="873" y="1041.8" width="25.7" height="24.1" fill="#1f1c5c"/>
<text x="877" y="1059.5" font-family="Liberation Sans" font-weight="700" font-size="14" fill="#91c9f7" textLength="18" lengthAdjust="spacingAndGlyphs">Ps</text>
<rect x="861.2" y="1077" width="50.8" height="3" fill="#cf3b2b"/>
<!-- whatsapp -->
<path d="M934.5 1068.5 L936.5 1061.5 Q933 1055 935.5 1049 Q940 1040 949 1040.3 Q959 1041 962.5 1050 Q965 1059 958 1065.5 Q950.5 1071 941.5 1067 Z" fill="none" stroke="#1d9a4d" stroke-width="2.6" stroke-linejoin="round"/>
<path d="M943.5 1048.5 Q941.5 1050 942.5 1053 Q945 1059 951.5 1061.5 Q954 1062.5 955.8 1060.5 L956 1058.8 L952.5 1057 L951 1058.5 Q947 1056.5 945.8 1053 L947 1051.5 L945.8 1048.3 Z" fill="#1d9a4d"/>
<circle cx="963.7" cy="1064.2" r="9.2" fill="#d6d5d4" stroke="#3a3a3a" stroke-width="1"/>
<text x="963.7" y="1069.6" font-family="Liberation Sans" font-size="14" fill="#111" text-anchor="middle">1</text>
<!-- chrome -->
<rect x="980.2" y="1030" width="60.6" height="47" fill="#f1ede9"/>
<rect x="980.2" y="1077" width="60.6" height="3" fill="#cf3b2b"/>
<circle cx="1010.1" cy="1055" r="15" fill="#db4437"/>
<path d="M1010.1 1055 L1023.09 1062.5 A15 15 0 0 1 1000 1066.1 Z" fill="#0f9d58"/>
<path d="M1010.1 1055 L997.11 1062.5 A15 15 0 0 1 995.1 1055 A15 15 0 0 1 1003 1041.8 Z" fill="#0f9d58"/>
<path d="M1010.1 1040 A15 15 0 0 1 1023.09 1047.5 H1010.1 Z" fill="#db4437"/>
<path d="M1023.09 1047.5 A15 15 0 0 1 1010.1 1070 L1016.6 1058.75 Z" fill="url(#chg)"/>
<path d="M1010.1 1040 A15 15 0 0 0 997.11 1047.5 L1003.6 1058.75 L1010.1 1047.5 H1023.09 A15 15 0 0 0 1010.1 1040 Z" fill="#db4437"/>
<path d="M997.11 1047.5 A15 15 0 0 0 1010.1 1070 L1016.6 1058.75 L1003.6 1058.75 Z" fill="#0f9d58"/>
<path d="M1023.09 1047.5 H1010.1 L1016.6 1058.75 L1010.1 1070 A15 15 0 0 0 1023.09 1047.5 Z" fill="url(#chg)"/>
<circle cx="1010.1" cy="1055" r="6.8" fill="#fff"/><circle cx="1010.1" cy="1055" r="5.3" fill="#4285f4"/>
<!-- weather -->
<circle cx="1386" cy="1054.5" r="12.5" fill="#f39c1f"/>
<circle cx="1384" cy="1052" r="10" fill="#f7b23a" opacity="0.7"/>
<path d="M1383 1066 Q1379 1066 1379.5 1062 Q1380 1058.5 1384 1059 Q1386 1054.5 1391 1055.5 Q1396 1056 1396 1060.5 Q1400.5 1060.5 1400.5 1063.5 Q1400.5 1066 1397 1066 Z" fill="#9cc8ee"/>
<!-- tray icons -->
<path d="M1574 1060 L1581.5 1051.5 L1589 1060" fill="none" stroke="#1a1a1a" stroke-width="1.3"/>
<path d="M1607 1050 H1614 Q1616.5 1050 1616.5 1052.5 V1060 Q1616.5 1062.6 1614 1062.6 H1607 Q1605 1062.6 1605 1060 V1052.5 Q1605 1050 1607 1050 Z" fill="none" stroke="#1a1a1a" stroke-width="1.2"/>
<path d="M1616.5 1054 L1620 1051.5 V1061 L1616.5 1058.5" fill="none" stroke="#1a1a1a" stroke-width="1.2"/><path d="M1607.5 1055 H1613.5 V1058 H1607.5 Z" fill="#1a1a1a"/>
<rect x="1633" y="1051" width="17" height="9.5" fill="none" stroke="#1a1a1a" stroke-width="1.2"/><rect x="1634.8" y="1052.8" width="11.5" height="6" fill="#1a1a1a"/><rect x="1650.2" y="1053.8" width="1.6" height="4" fill="#1a1a1a"/>
<path d="M1665.5 1062.5 Q1666 1049 1679.5 1048.5 M1668.5 1062.5 Q1669 1052 1679.5 1051.5 M1671.5 1062.5 Q1672 1055 1679.5 1054.5 M1674.5 1062.5 Q1675 1058 1679.5 1057.5" fill="none" stroke="#1a1a1a" stroke-width="1.1"/><circle cx="1678.5" cy="1061.5" r="1.3" fill="#1a1a1a"/>
<path d="M1692 1052.5 H1695.5 L1700 1048.5 V1063 L1695.5 1059 H1692 Z" fill="none" stroke="#1a1a1a" stroke-width="1.2" stroke-linejoin="round"/>
<path d="M1703 1052.5 Q1705 1055.7 1703 1059 M1706 1050 Q1709.5 1055.7 1706 1061.5 M1709.3 1047.5 Q1714.5 1055.7 1709.3 1064" fill="none" stroke="#1a1a1a" stroke-width="1.1"/>
<!-- notification -->
<path d="M1869.5 1046.5 H1889 V1060 H1877 L1872.5 1063.5 V1060 H1869.5 Z" fill="#1a1a1a"/>
<path d="M1872.5 1050 H1886 M1872.5 1053 H1886 M1872.5 1056 H1882" stroke="#e3e0dd" stroke-width="1"/>
<circle cx="1888.3" cy="1064.3" r="9" fill="#d8d6d4" stroke="#555" stroke-width="1"/>
<path d="M1914.8 1031 V1080" stroke="#b8b5b2" stroke-width="1"/>
</svg>
<div class="t" style="left:110.9px;top:1046.5px;font-size:17.6px;color:#1a1a1a;">Cerca</div>
<div class="t" style="left:1410.7px;top:1046.8px;font-size:17.5px;color:#1a1a1a;word-spacing:3px;">18°C  Soleggiato</div>
<div class="t" style="left:1727.5px;top:1037.3px;font-size:15px;color:#1a1a1a;">ITA</div>
<div class="t" style="left:1727.5px;top:1059px;font-size:15px;color:#1a1a1a;">142</div>
<div class="t" style="left:1790px;top:1037.3px;font-size:14.5px;color:#1a1a1a;">09:53</div>
<div class="t" style="left:1770.7px;top:1059px;font-size:15px;color:#1a1a1a;">19/05/2025</div>
<div class="t" style="left:1883.7px;top:1058.5px;font-size:13px;font-weight:700;color:#1a1a1a;">4</div>

</body></html>
